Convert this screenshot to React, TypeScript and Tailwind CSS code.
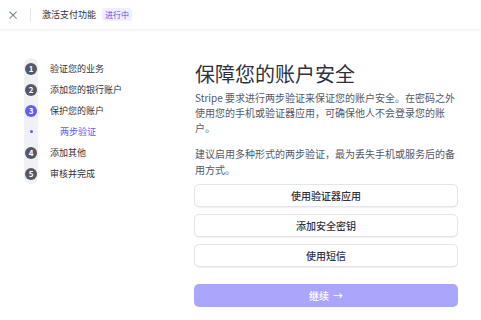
const steps = [
  { n: '1', label: '验证您的业务', state: 'done' },
  { n: '2', label: '添加您的银行账户', state: 'done' },
  { n: '3', label: '保护您的账户', state: 'active' },
  { n: '', label: '两步验证', state: 'sub' },
  { n: '4', label: '添加其他', state: 'todo' },
  { n: '5', label: '审核并完成', state: 'todo' },
]

const options = ['使用验证器应用', '添加安全密钥', '使用短信']

export default function App() {
  return (
    <div
      className="w-[481px] h-[320px] bg-white overflow-hidden text-[#414552]"
      style={{ fontFamily: '"Noto Sans CJK SC", "Noto Sans", sans-serif' }}
    >
      {/* Header */}
      <div className="h-[30px] flex items-center shadow-[0_1px_2px_rgba(0,0,0,0.04)] border-b border-[#f3f4f6]">
        <span className="w-[24px] text-center text-[12px] text-[#6b7280] ml-[1px]">×</span>
        <div className="w-px h-[14px] bg-[#e5e7eb] ml-[5px]" />
        <span className="ml-[11px] text-[9px] text-[#30313d]">激活支付功能</span>
        <span className="ml-[6px] px-[3px] h-[13px] flex items-center rounded-[3px] bg-[#f1efff] text-[8px] text-[#5a50e6]">
          进行中
        </span>
      </div>

      <div className="flex">
        {/* Stepper */}
        <div className="w-[194px] pl-[24px] pt-[28px]">
          <div className="relative">
            <div className="absolute left-0 top-0 w-[14px] h-[126px] rounded-full bg-[#f0f1f5]" />
            <div className="relative flex flex-col">
              {steps.map((s) => (
                <div key={s.label} className="h-[21px] flex items-center">
                  <div className="w-[14px] flex justify-center">
                    {s.state === 'sub' ? (
                      <div className="w-[3px] h-[3px] rounded-full bg-[#635bff]" />
                    ) : (
                      <div
                        className={
                          s.state === 'active'
                            ? 'w-[12px] h-[12px] rounded-full bg-[#635bff] text-white text-[8px] font-bold flex items-center justify-center'
                            : 'w-[12px] h-[12px] rounded-full bg-[#545969] text-white text-[8px] font-bold flex items-center justify-center'
                        }
                      >
                        {s.n}
                      </div>
                    )}
                  </div>
                  <span
                    className={
                      s.state === 'sub'
                        ? 'ml-[22px] text-[9px] text-[#635bff]'
                        : 'ml-[12px] text-[9px] text-[#30313d]'
                    }
                  >
                    {s.label}
                  </span>
                </div>
              ))}
            </div>
          </div>
        </div>

        {/* Content */}
        <div className="w-[264px] pt-[31px]">
          <h1 className="text-[20px] leading-[26px] text-[#30313d] ml-[1px]">保障您的账户安全</h1>
          <p className="mt-[3px] text-[10px] leading-[15px] text-[#545969] ml-[1px]">
            Stripe 要求进行两步验证来保证您的账户安全。在密码之外使用您的手机或验证器应用，可确保他人不会登录您的账户。
          </p>
          <p className="mt-[11px] text-[10px] leading-[16px] text-[#545969] ml-[1px]">
            建议启用多种形式的两步验证，最为丢失手机或服务后的备用方式。
          </p>
          <div className="mt-[6px] flex flex-col gap-[7px]">
            {options.map((o) => (
              <button
                key={o}
                className="h-[23px] w-full rounded-[5px] border border-[#e3e5ea] shadow-[0_1px_1px_rgba(0,0,0,0.06)] bg-white text-[10px] font-medium text-[#30313d] flex items-center justify-center"
              >
                {o}
              </button>
            ))}
          </div>
          <button className="mt-[17px] h-[23px] w-full rounded-[5px] bg-[#a9a6fc] text-white text-[10px] font-medium flex items-center justify-center gap-[4px]">
            继续 <span className="text-[10px]">→</span>
          </button>
        </div>
      </div>
    </div>
  )
}
